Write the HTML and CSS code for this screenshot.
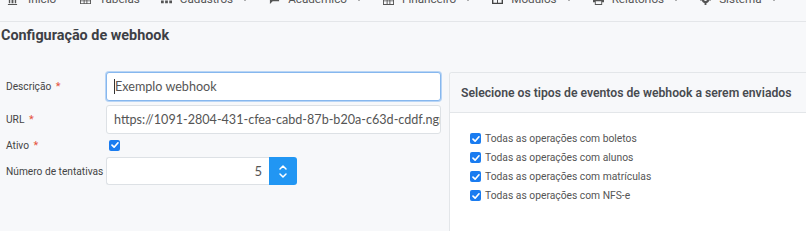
FILE: index.html
```html
<!DOCTYPE html>
<html lang="pt-BR">
<head>
<meta charset="utf-8">
<link rel="stylesheet" href="styles.css">
</head>
<body>
<nav class="topnav">
  <div class="nav-item"><svg class="ni" viewBox="0 0 12 12"><path d="M1 11h10v1H1zM2 5h1.5v5H2zm3 0h2v5H5zm3.5 0H10v5H8.5zM1 3.5 6 1l5 2.5V4H1z" fill="#555"/></svg><span>Início</span></div>
  <div class="nav-item"><svg class="ni" viewBox="0 0 12 12"><path d="M0 2h12v9H0zm1 3v2h3V5zm4 0v2h2V5zm3 0v2h3V5zM1 8v2h3V8zm4 0v2h2V8zm3 0v2h3V8z" fill="#555" fill-rule="evenodd"/></svg><span>Tabelas</span></div>
  <div class="nav-item"><svg class="ni" viewBox="0 0 12 12"><path d="M0 2h3v3H0zm4.5 0h3v3h-3zM9 2h3v3H9zM0 7h3v3H0zm4.5 0h3v3h-3zM9 7h3v3H9z" fill="#555"/></svg><span>Cadastros</span><i class="caret"></i></div>
  <div class="nav-item"><svg class="ni" viewBox="0 0 12 12"><path d="M1 1h10v7H4l-3 3z" fill="#555"/></svg><span>Acadêmico</span><i class="caret"></i></div>
  <div class="nav-item"><svg class="ni" viewBox="0 0 12 12"><path d="M0 1h12v11H0zm1 4v2h3V5zm4 0v2h2V5zm3 0v2h3V5zM1 8v3h3V8zm4 0v3h2V8zm3 0v3h3V8z" fill="#555" fill-rule="evenodd"/></svg><span>Financeiro</span><i class="caret"></i></div>
  <div class="nav-item"><svg class="ni" viewBox="0 0 12 12"><path d="M0 1h12v10H0zm1.5 3v5.5h4V4zm5 0v5.5h4V4z" fill="#444" fill-rule="evenodd"/></svg><span>Módulos</span><i class="caret"></i></div>
  <div class="nav-item"><svg class="ni" viewBox="0 0 12 12"><path d="M3 0h6v3H3zM0 4h12v5h-2v3H2V9H0zm3 4v3h6V8z" fill="#555" fill-rule="evenodd"/></svg><span>Relatórios</span><i class="caret"></i></div>
  <div class="nav-item"><svg class="ni" viewBox="0 0 12 12"><circle cx="6" cy="6" r="4" fill="#555"/><path d="M5 0h2v12H5zM0 5h12v2H0z" fill="#555"/><circle cx="6" cy="6" r="1.6" fill="#f7f8fa"/></svg><span>Sistema</span><i class="caret"></i></div>
</nav>

<h1 class="page-title">Configuração de webhook</h1>

<main class="content">
  <form class="form">
    <div class="row">
      <label class="lbl">Descrição <b class="req">*</b></label>
      <div class="input focused"><span class="caret-bar"></span>Exemplo webhook</div>
    </div>
    <div class="row">
      <label class="lbl">URL <b class="req">*</b></label>
      <div class="input">https://1091-2804-431-cfea-cabd-87b-b20a-c63d-cddf.ngrok.io/webhook</div>
    </div>
    <div class="row row-check">
      <label class="lbl">Ativo <b class="req">*</b></label>
      <span class="cb"><svg viewBox="0 0 10 10"><path d="M2 5.2 4.1 7.2 8 2.8" fill="none" stroke="#fff" stroke-width="1.7" stroke-linecap="round" stroke-linejoin="round"/></svg></span>
    </div>
    <div class="row">
      <label class="lbl">Número de tentativas</label>
      <div class="num">
        <div class="num-input">5</div>
        <div class="spin">
          <svg viewBox="0 0 10 8"><path d="M2 6 5 3l3 3" fill="none" stroke="#fff" stroke-width="1.5" stroke-linecap="round" stroke-linejoin="round"/></svg>
          <svg viewBox="0 0 10 8"><path d="M2 2l3 3 3-3" fill="none" stroke="#fff" stroke-width="1.5" stroke-linecap="round" stroke-linejoin="round"/></svg>
        </div>
      </div>
    </div>
  </form>

  <section class="panel">
    <header class="panel-head">Selecione os tipos de eventos de webhook a serem enviados</header>
    <div class="panel-body">
      <div class="opt"><span class="cb"><svg viewBox="0 0 10 10"><path d="M2 5.2 4.1 7.2 8 2.8" fill="none" stroke="#fff" stroke-width="1.7" stroke-linecap="round" stroke-linejoin="round"/></svg></span>Todas as operações com boletos</div>
      <div class="opt"><span class="cb"><svg viewBox="0 0 10 10"><path d="M2 5.2 4.1 7.2 8 2.8" fill="none" stroke="#fff" stroke-width="1.7" stroke-linecap="round" stroke-linejoin="round"/></svg></span>Todas as operações com alunos</div>
      <div class="opt"><span class="cb"><svg viewBox="0 0 10 10"><path d="M2 5.2 4.1 7.2 8 2.8" fill="none" stroke="#fff" stroke-width="1.7" stroke-linecap="round" stroke-linejoin="round"/></svg></span>Todas as operações com matrículas</div>
      <div class="opt"><span class="cb"><svg viewBox="0 0 10 10"><path d="M2 5.2 4.1 7.2 8 2.8" fill="none" stroke="#fff" stroke-width="1.7" stroke-linecap="round" stroke-linejoin="round"/></svg></span>Todas as operações com NFS-e</div>
    </div>
  </section>
</main>
</body>
</html>
```

FILE: styles.css
```css
* { box-sizing: border-box; }
html, body { margin: 0; padding: 0; }
body {
  width: 806px;
  height: 231px;
  overflow: hidden;
  background: #f7f8fa;
  font-family: Roboto, "Liberation Sans", Arial, sans-serif;
  color: #555;
}

.topnav {
  display: flex;
  align-items: flex-start;
  height: 33px;
  margin-top: -11px;
  padding: 3px 0 0 7px;
  border-bottom: 1px solid #e4e6e9;
  font-size: 11.7px;
  line-height: 15px;
  color: #555;
  overflow: hidden;
}
.nav-item {
  display: flex;
  align-items: center;
  margin-right: 21px;
  white-space: nowrap;
}
.ni { width: 11px; height: 11px; margin-right: 8px; }
.nav-item:first-child .ni { margin-right: 10px; }
.nav-item:first-child { margin-right: 24px; }
.caret {
  display: inline-block;
  width: 0; height: 0;
  margin-left: 9px;
  border-left: 3px solid transparent;
  border-right: 3px solid transparent;
  border-top: 3px solid #666;
}

.page-title {
  margin: 0;
  padding: 5px 0 0 1px;
  height: 50px;
  font-size: 14.4px;
  font-weight: 700;
  color: #3d4045;
}

.content {
  display: flex;
  align-items: flex-start;
}

.form {
  width: 449px;
  flex: none;
  padding: 0 8px 0 6px;
}
.row {
  display: flex;
  align-items: center;
  margin-bottom: 4px;
}
.lbl {
  width: 100px;
  flex: none;
  font-size: 10.2px;
  color: #444;
  white-space: nowrap;
}
.req { color: #e5533d; font-weight: 400; font-size: 11px; margin-left: 2px; }
.input {
  width: 335px;
  height: 29px;
  background: #fff;
  border: 1px solid #dde1e5;
  border-radius: 3px;
  padding: 0 7px;
  font-size: 12.6px;
  line-height: 27px;
  color: #555;
  white-space: nowrap;
  overflow: hidden;
  font-family: Lato, Roboto, sans-serif;
}
.input.focused {
  border-color: #86b7ee;
  box-shadow: 0 0 0 1px #b9d5f5;
}
.caret-bar {
  display: inline-block;
  width: 1px;
  height: 15px;
  background: #333;
  vertical-align: -3px;
}
.row-check { height: 14px; margin-bottom: 5px; }
.row-check .cb { margin-left: 3px; }

.cb {
  display: inline-flex;
  align-items: center;
  justify-content: center;
  width: 11px;
  height: 11px;
  background: #1a7cf0;
  border-radius: 2px;
  flex: none;
}
.cb svg { width: 10px; height: 10px; }

.num {
  display: flex;
  height: 28px;
}
.num-input {
  width: 163px;
  height: 28px;
  background: #fff;
  border: 1px solid #dde1e5;
  border-right: none;
  border-radius: 3px 0 0 3px;
  font-size: 13px;
  line-height: 26px;
  text-align: right;
  padding-right: 7px;
  color: #555;
  font-family: Lato, Roboto, sans-serif;
}
.spin {
  width: 28px;
  height: 28px;
  background: #2196f3;
  border-radius: 0 3px 3px 0;
  display: flex;
  flex-direction: column;
  align-items: center;
  justify-content: center;
  gap: 1px;
}
.spin svg { width: 10px; height: 8px; }

.panel {
  flex: 1;
  min-width: 0;
  height: 170px;
  background: #fff;
  border: 1px solid #e3e6e9;
  border-right: none;
  border-radius: 3px 0 0 0;
  overflow: hidden;
}
.panel-head {
  height: 40px;
  background: #f7f8fa;
  border-bottom: 1px solid #e3e6e9;
  padding: 0 0 0 11px;
  font-size: 12.2px;
  font-weight: 600;
  line-height: 40px;
  color: #484b50;
  white-space: nowrap;
}
.panel-body {
  padding: 16px 0 0 20px;
}
.opt {
  display: flex;
  align-items: center;
  height: 19px;
  font-size: 10.3px;
  color: #555;
}
.opt .cb { margin-right: 4px; }
```
